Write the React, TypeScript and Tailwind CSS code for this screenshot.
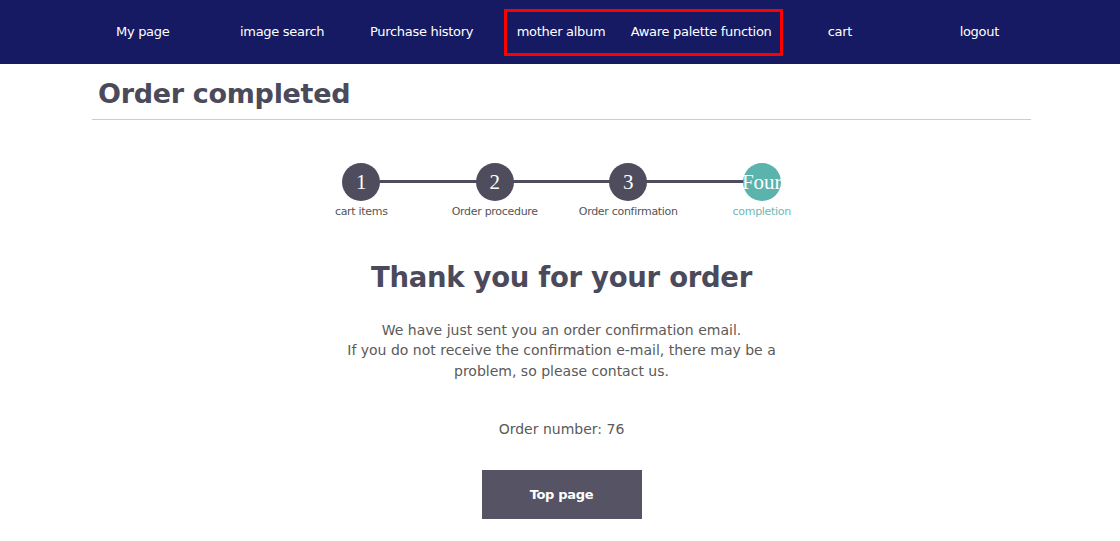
import React from "react";

const font = { fontFamily: '"DejaVu Sans", "Noto Sans", sans-serif' };

export default function App() {
  const nav = ["My page", "image search", "Purchase history", "mother album", "Aware palette function", "cart", "logout"];
  const steps = [
    { n: "1", label: "cart items" },
    { n: "2", label: "Order procedure" },
    { n: "3", label: "Order confirmation" },
    { n: "Four", label: "completion", active: true },
  ];
  return (
    <div className="w-[1120px] h-[541px] bg-white overflow-hidden" style={font}>
      <header className="h-[64px] bg-[#151a63] flex justify-center pl-[2px]">
        <nav className="relative w-[976px] grid grid-cols-7 items-center">
          {nav.map((t) => (
            <div key={t} className="text-center text-white text-[13px] tracking-[-0.3px] whitespace-nowrap">
              {t}
            </div>
          ))}
          <div className="absolute left-[431px] top-[9px] w-[279px] h-[47px] border-[3px] border-[#ff0000]" />
        </nav>
      </header>
      <main className="w-[939px] ml-[92px]">
        <h1 className="pl-[6px] pt-[12px] pb-[7px] text-[27px] font-bold text-[#4b4a5b] leading-[36px] tracking-[-0.3px] border-b border-[#cccccc]">
          Order completed
        </h1>
        <div className="flex justify-center pt-[43px]">
          <div className="relative flex">
            <div className="absolute left-[67px] right-[67px] top-[17px] h-[3px] bg-[#4f4c5e]" />
            {steps.map((s) => (
              <div key={s.label} className="relative w-[133.5px] flex flex-col items-center">
                <div
                  className={`w-[38px] h-[38px] rounded-full flex items-center justify-center text-white leading-none whitespace-nowrap ${
                    s.active ? "bg-[#5bb3ae]" : "bg-[#4f4c5e]"
                  }`}
                  style={{ fontFamily: '"Liberation Serif", serif', fontSize: 21 }}
                >
                  {s.n}
                </div>
                <div
                  className={`mt-[3px] text-[11px] whitespace-nowrap tracking-[-0.3px] ${
                    s.active ? "text-[#6cb8b4]" : "text-[#555555]"
                  }`}
                >
                  {s.label}
                </div>
              </div>
            ))}
          </div>
        </div>
        <h2 className="mt-[38px] text-center text-[27.5px] font-bold text-[#4b4a5b] leading-[36px] tracking-[-0.3px]">
          Thank you for your order
        </h2>
        <p className="mt-[25px] text-center text-[14px] leading-[20.5px] text-[#5a5a5a]">
          We have just sent you an order confirmation email.
          <br />
          If you do not receive the confirmation e-mail, there may be a
          <br />
          problem, so please contact us.
        </p>
        <p className="mt-[38px] text-center text-[14px] leading-[20px] text-[#5a5a5a]">Order number: 76</p>
        <div className="flex justify-center mt-[31px]">
          <button className="w-[160px] h-[49px] bg-[#555364] text-white text-[13px] font-bold tracking-[-0.3px]">
            Top page
          </button>
        </div>
      </main>
    </div>
  );
}
